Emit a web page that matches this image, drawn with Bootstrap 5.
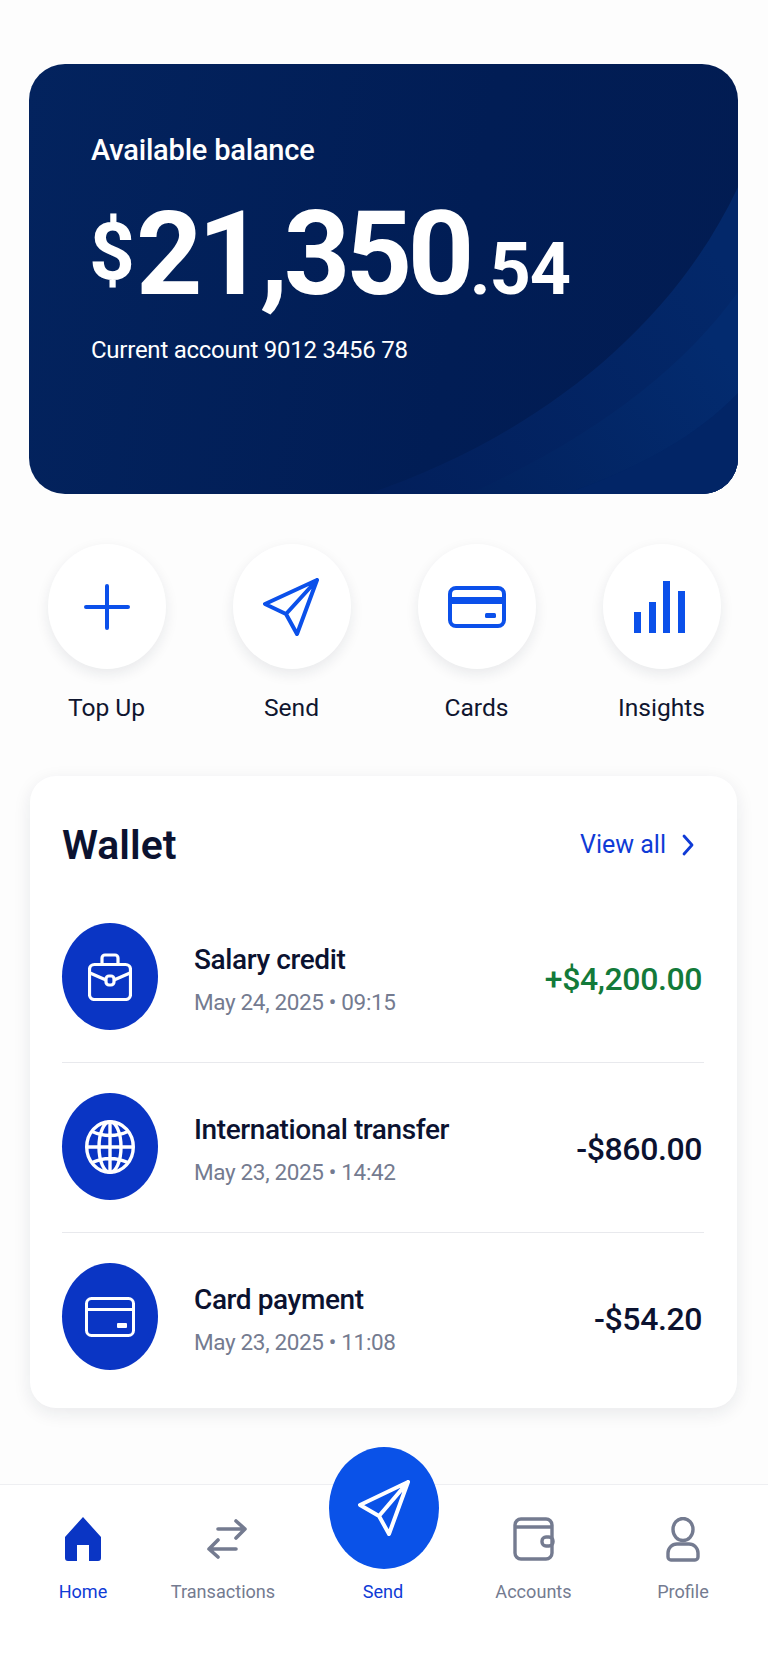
<!DOCTYPE html>
<html lang="en">
<head>
<meta charset="UTF-8">
<meta name="viewport" content="width=device-width, initial-scale=1.0">
<link href="https://cdn.jsdelivr.net/npm/bootstrap@5.3.0/dist/css/bootstrap.min.css" rel="stylesheet">
<title>Wallet</title>
<style>
body { background: #fdfdfd; font-family: Roboto, "Liberation Sans", sans-serif; color: #0b1230; width: 768px; height: 1664px; overflow: hidden; }
svg { display: block; }
.app-page { padding-top: 64px; }

.balance-card { margin-left: 29px; width: 709px; height: 430px; border-radius: 36px; background: linear-gradient(100deg, #03235e 0%, #011d55 60%, #021c52 100%); color: #fff; padding: 67px 62px 0; overflow: hidden; }
.balance-wave { position: absolute; left: 0; top: 0; }
.balance-label { position: relative; font-size: 29px; font-weight: 500; line-height: 38px; letter-spacing: -.2px; }
.balance-amount { position: relative; font-size: 116px; font-weight: 700; line-height: 118px; margin-top: 24px; white-space: nowrap; letter-spacing: -4.6px; }
.amt-sign { font-size: 80px; vertical-align: 15px; margin-left: -2px; margin-right: 1px; letter-spacing: 0; }
.amt-cents { font-size: 72px; letter-spacing: -1px; }
.balance-sub { position: relative; font-size: 24px; line-height: 32px; margin-top: 5px; letter-spacing: -.25px; }

.quick-row { margin-top: 50px; padding-left: 14px; }
.quick-item { width: 185px; }
.quick-circle { width: 118px; height: 125px; border-radius: 50%; background: #fff; box-shadow: 0 5px 14px rgba(20, 30, 60, .09); }
.quick-label { font-size: 24.6px; line-height: 30px; margin-top: 24px; color: #10162f; }

.wallet-card { margin: 53px 0 0 30px; width: 707px; height: 632px; border-radius: 26px; border: 0; background: #fff; box-shadow: 0 5px 18px rgba(20, 30, 60, .09); padding: 40px 33px 0 32px; }
.wallet-head { margin-bottom: 19px; }
.wallet-title { font-size: 41px; font-weight: 600; line-height: 58px; color: #0b1230; }
.view-link { color: #0f3bd6; font-size: 25px; text-decoration: none; padding-right: 10px; }
.tx-row { padding: 30px 2px 32px 0; border-bottom: 1px solid #e8e9ed; }
.tx-row:last-child { border-bottom: 0; }
.tx-circle { width: 96px; height: 107px; border-radius: 50%; background: #0a35c4; margin-right: 36px; }
.tx-text { padding-top: 6px; }
.tx-title { font-size: 28px; font-weight: 500; line-height: 34px; color: #0b1230; letter-spacing: -.4px; }
.tx-sub { font-size: 22.5px; line-height: 30px; margin-top: 10px; color: #747b90; letter-spacing: -.35px; }
.tx-amount { font-size: 32px; font-weight: 500; color: #0b1230; padding-top: 4px; letter-spacing: -.4px; }
.tx-plus { color: #137a3a; }

.tab-bar { margin-top: 76px; height: 180px; border-top: 1px solid #eeeff2; background: #fff; padding-left: 34px; display: grid; grid-template-columns: 98px 182px 138px 163px 136px; }
.tab-item { position: relative; padding-top: 31px; font-size: 18.1px; line-height: 26px; color: #747b90; }
.tab-icon { height: 46px; margin-bottom: 17px; }
.tab-swap { padding-left: 8px; }
.tab-active { color: #0f3bd6; }
.tab-fab { position: absolute; left: 15px; top: -38px; width: 110px; height: 122px; border-radius: 50%; background: #0a52e8; }
</style>
</head>
<body>
<div class="app-page">

    <!-- balance -->
    <div class="balance-card position-relative">
        <svg class="balance-wave" width="709" height="430" viewBox="0 0 709 430">
            <defs>
                <linearGradient id="waveFill" x1="0" y1="1" x2="1" y2="0.3">
                    <stop offset="0" stop-color="#021f5b"/>
                    <stop offset="1" stop-color="#03286a"/>
                </linearGradient>
                <linearGradient id="waveFill2" x1="0" y1="1" x2="1" y2="0.4">
                    <stop offset="0" stop-color="#02225e"/>
                    <stop offset="1" stop-color="#032b6f"/>
                </linearGradient>
            </defs>
            <path d="M709 123C640 270 500 375 339 430H709Z" fill="url(#waveFill)"/>
            <path d="M709 228C650 310 560 375 440 430H709Z" fill="url(#waveFill2)"/>
            <path d="M709 329C670 370 610 405 535 430H709Z" fill="#022566"/>
        </svg>
        <div class="balance-label">Available balance</div>
        <div class="balance-amount"><span class="amt-sign">$</span>21,350<span class="amt-cents">.54</span></div>
        <div class="balance-sub">Current account 9012 3456 78</div>
    </div>

    <!-- quick actions -->
    <div class="quick-row d-flex">
        <div class="quick-item d-flex flex-column align-items-center">
            <div class="quick-circle d-flex align-items-center justify-content-center">
                <svg width="46" height="46" viewBox="0 0 46 46" fill="none" stroke="#0b50ea" stroke-width="4" stroke-linecap="round"><path d="M23 2V44M2 23H44"/></svg>
            </div>
            <div class="quick-label">Top Up</div>
        </div>
        <div class="quick-item d-flex flex-column align-items-center">
            <div class="quick-circle d-flex align-items-center justify-content-center">
                <svg width="58" height="58" viewBox="0 0 58 58" fill="none" stroke="#0b50ea" stroke-width="4" stroke-linejoin="round" stroke-linecap="round"><path d="M54 2L2 26L23 36L34 56ZM54 2L23 36"/></svg>
            </div>
            <div class="quick-label">Send</div>
        </div>
        <div class="quick-item d-flex flex-column align-items-center">
            <div class="quick-circle d-flex align-items-center justify-content-center">
                <svg width="58" height="42" viewBox="0 0 58 42"><rect x="2" y="2" width="54" height="38" rx="6" fill="none" stroke="#0b50ea" stroke-width="4"/><rect x="2" y="11" width="54" height="7" fill="#0b50ea"/><rect x="37" y="27" width="11" height="5" rx="1.5" fill="#0b50ea"/></svg>
            </div>
            <div class="quick-label">Cards</div>
        </div>
        <div class="quick-item d-flex flex-column align-items-center">
            <div class="quick-circle d-flex align-items-center justify-content-center">
                <svg width="55" height="52" viewBox="0 0 55 52" fill="#0b50ea"><rect x="0" y="31" width="7" height="21"/><rect x="15" y="21" width="7" height="31"/><rect x="29" y="0" width="7" height="52"/><rect x="44" y="10" width="7" height="42"/></svg>
            </div>
            <div class="quick-label">Insights</div>
        </div>
    </div>

    <!-- wallet -->
    <div class="card wallet-card">
        <div class="wallet-head d-flex justify-content-between align-items-center">
            <div class="wallet-title">Wallet</div>
            <a class="view-link d-flex align-items-center gap-3" href="#">View all
                <svg width="12" height="22" viewBox="0 0 12 22" fill="none" stroke="#0f3bd6" stroke-width="2.8" stroke-linecap="round" stroke-linejoin="round"><path d="M2 2L10 11L2 20"/></svg>
            </a>
        </div>

        <div class="tx-row d-flex align-items-center">
            <div class="tx-circle d-flex align-items-center justify-content-center">
                <svg width="44" height="48" viewBox="0 0 44 48" fill="none" stroke="#fff" stroke-width="3.2" stroke-linejoin="round"><rect x="1.5" y="11.5" width="41" height="35" rx="5"/><path d="M14 11V5A3 3 0 0 1 17 2H27A3 3 0 0 1 30 5V11"/><path d="M2 20L18 27M42 20L26 27"/><rect x="18" y="23" width="8" height="9" rx="3"/></svg>
            </div>
            <div class="tx-text flex-grow-1">
                <div class="tx-title">Salary credit</div>
                <div class="tx-sub">May 24, 2025 • 09:15</div>
            </div>
            <div class="tx-amount tx-plus">+$4,200.00</div>
        </div>

        <div class="tx-row d-flex align-items-center">
            <div class="tx-circle d-flex align-items-center justify-content-center">
                <svg width="50" height="54" viewBox="0 0 50 54" fill="none" stroke="#fff" stroke-width="3.4"><ellipse cx="25" cy="27" rx="23.3" ry="25.3"/><ellipse cx="25" cy="27" rx="11" ry="25.3"/><path d="M25 1.5V52.5M1.5 27H48.5M6 11Q25 20 44 11M6 43Q25 34 44 43"/></svg>
            </div>
            <div class="tx-text flex-grow-1">
                <div class="tx-title">International transfer</div>
                <div class="tx-sub">May 23, 2025 • 14:42</div>
            </div>
            <div class="tx-amount">-$860.00</div>
        </div>

        <div class="tx-row d-flex align-items-center">
            <div class="tx-circle d-flex align-items-center justify-content-center">
                <svg width="50" height="40" viewBox="0 0 50 40"><rect x="1.5" y="1.5" width="47" height="37" rx="5" fill="none" stroke="#fff" stroke-width="3"/><rect x="2" y="11" width="46" height="3" fill="#fff"/><rect x="32" y="26" width="10" height="5" rx="1" fill="#fff"/></svg>
            </div>
            <div class="tx-text flex-grow-1">
                <div class="tx-title">Card payment</div>
                <div class="tx-sub">May 23, 2025 • 11:08</div>
            </div>
            <div class="tx-amount">-$54.20</div>
        </div>
    </div>

    <!-- bottom tabs -->
    <div class="tab-bar">
        <div class="tab-item tab-active d-flex flex-column align-items-center">
            <div class="tab-icon d-flex align-items-center">
                <svg width="36" height="44" viewBox="0 0 36 44"><path fill="#0a35c4" d="M18 0L36 20V41A3 3 0 0 1 33 44H24V28H12V44H3A3 3 0 0 1 0 41V20Z"/></svg>
            </div>
            <span>Home</span>
        </div>
        <div class="tab-item d-flex flex-column align-items-center">
            <div class="tab-icon tab-swap d-flex align-items-center">
                <svg width="42" height="40" viewBox="0 0 42 40" fill="none" stroke="#747b90" stroke-width="3.6" stroke-linecap="round" stroke-linejoin="round"><path d="M12 10H39M30 2L39 10L30 19M30 30H3M12 21L3 30L12 38"/></svg>
            </div>
            <span>Transactions</span>
        </div>
        <div class="tab-item tab-active d-flex flex-column align-items-center">
            <div class="tab-fab d-flex align-items-center justify-content-center">
                <svg width="52" height="56" viewBox="0 0 52 56" fill="none" stroke="#fff" stroke-width="4" stroke-linejoin="round" stroke-linecap="round"><path d="M50 2L2 25L21 36L31 54ZM50 2L21 36"/></svg>
            </div>
            <div class="tab-icon"></div>
            <span>Send</span>
        </div>
        <div class="tab-item d-flex flex-column align-items-center">
            <div class="tab-icon d-flex align-items-center">
                <svg width="42" height="44" viewBox="0 0 42 44" fill="none" stroke="#747b90" stroke-width="3.4" stroke-linejoin="round"><rect x="2" y="2" width="37" height="40" rx="6"/><path d="M2 10H39"/><rect x="29" y="20" width="11" height="9" rx="4"/></svg>
            </div>
            <span>Accounts</span>
        </div>
        <div class="tab-item d-flex flex-column align-items-center">
            <div class="tab-icon d-flex align-items-center">
                <svg width="34" height="45" viewBox="0 0 34 45" fill="none" stroke="#747b90" stroke-width="3.4"><ellipse cx="17" cy="12.5" rx="10" ry="11"/><path d="M2 36A9 9 0 0 1 11 27H23A9 9 0 0 1 32 36V40A3 3 0 0 1 29 43H5A3 3 0 0 1 2 40Z"/></svg>
            </div>
            <span>Profile</span>
        </div>
    </div>
</div>
<script src="https://cdn.jsdelivr.net/npm/bootstrap@5.3.0/dist/js/bootstrap.bundle.min.js"></script>
</body>
</html>
